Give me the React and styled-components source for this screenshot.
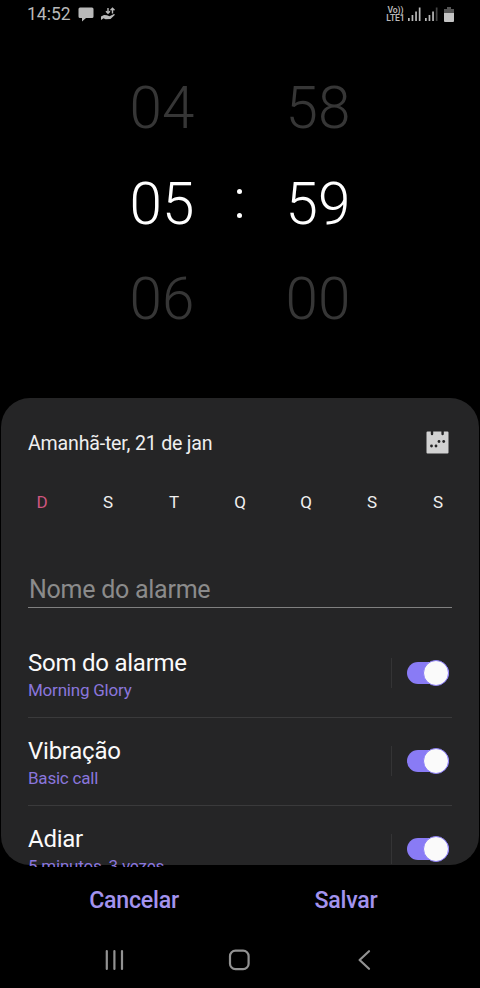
import styled, { createGlobalStyle } from 'styled-components';

const GlobalStyle = createGlobalStyle`
    * {
        box-sizing: border-box;
    }
    body {
        margin: 0;
        background: #000;
    }
`;

const Screen = styled.div`
    display: flex;
    flex-direction: column;
    width: 480px;
    height: 988px;
    overflow: hidden;
    background: #000;
    color: #fafafa;
    font-family: Roboto, sans-serif;
`;

const StatusBar = styled.div`
    display: flex;
    justify-content: space-between;
    align-items: center;
    height: 28px;
    padding: 0 26px 0 27px;
    color: #b9b9b9;
`;

const Clock = styled.span`
    width: 51px;
    font-size: 17.5px;
    line-height: 28px;
`;

const StatusGroup = styled.div`
    display: flex;
    align-items: center;
    height: 28px;
`;

const VolteBadge = styled.div`
    display: flex;
    flex-direction: column;
    align-items: center;
    width: 18px;
    margin-right: 3px;
    font-size: 8.6px;
    font-weight: 600;
    line-height: 8px;
    letter-spacing: -0.1px;
    white-space: nowrap;
`;

const TimePicker = styled.div`
    display: grid;
    grid-template-columns: 66px 90px 66px;
    grid-auto-rows: 95.7px;
    justify-content: center;
    align-items: center;
    height: 370px;
    padding-top: 32px;
    align-content: start;
`;

const Digits = styled.span`
    text-align: center;
    font-size: 58.4px;
    font-weight: 300;
    line-height: 70px;
    color: ${({ $active }) => ($active ? '#fff' : '#363636')};
`;

const Colon = styled.span`
    display: flex;
    flex-direction: column;
    align-items: center;
    gap: 19px;
    padding-right: 1px;
`;

const ColonDot = styled.i`
    width: 5px;
    height: 5px;
    border-radius: 50%;
    background: #fff;
`;

const Card = styled.div`
    display: flex;
    flex-direction: column;
    height: 467px;
    margin: 0 1px;
    padding: 0 27px;
    border-radius: 29px;
    background: #252526;
    overflow: clip;
    overflow-clip-margin: 2px;
`;

const DateRow = styled.div`
    display: flex;
    flex-shrink: 0;
    justify-content: space-between;
    align-items: center;
    height: 90px;
    padding-right: 3px;
`;

const DateText = styled.span`
    font-size: 19.6px;
    letter-spacing: -0.2px;
    color: #efefef;
`;

const WeekRow = styled.div`
    display: flex;
    flex-shrink: 0;
    justify-content: space-between;
    height: 75px;
    padding-top: 4px;
`;

const Day = styled.span`
    width: 28px;
    text-align: center;
    font-size: 17px;
    line-height: 21px;
    color: ${({ $sunday }) => ($sunday ? '#cf5680' : '#f0f0f0')};
`;

const NameField = styled.div`
    flex-shrink: 0;
    height: 45px;
    padding: 12px 0 0 1px;
    border-bottom: 1px solid #808080;
    font-size: 25px;
    line-height: 30px;
    letter-spacing: -0.26px;
    color: #8b8b8b;
`;

const Options = styled.div`
    padding-top: 22px;
`;

const Option = styled.div`
    display: flex;
    justify-content: space-between;
    height: 88px;
    border-bottom: 1px solid #3a3a3b;
`;

const OptionText = styled.div`
    display: flex;
    flex-direction: column;
    padding-top: 18px;
`;

const OptionTitle = styled.span`
    font-size: 24px;
    line-height: 30px;
    letter-spacing: -0.24px;
`;

const OptionValue = styled.span`
    font-size: 17px;
    line-height: 24px;
    letter-spacing: -0.22px;
    color: #8a76dc;
`;

const ToggleArea = styled.div`
    display: flex;
    align-items: center;
    height: 30px;
    margin-top: 28px;
    padding: 0 3px 0 15px;
    border-left: 1px solid #343435;
`;

const Track = styled.div`
    display: flex;
    align-items: center;
    justify-content: flex-end;
    width: 42px;
    height: 22px;
    border-radius: 11px;
    background: #897bf5;
`;

const Knob = styled.div`
    flex-shrink: 0;
    width: 26px;
    height: 26px;
    border: 1px solid #897bf5;
    border-radius: 50%;
    background: #fafafa;
`;

const Actions = styled.div`
    display: flex;
    justify-content: center;
    height: 67px;
    padding: 20px 28px 0;
`;

const ActionButton = styled.button`
    flex: 1;
    height: 30px;
    padding: 0;
    border: 0;
    background: none;
    color: #a393ee;
    font-family: inherit;
    font-size: 23.2px;
    font-weight: 500;
    line-height: 30px;
    letter-spacing: -0.25px;
`;

const NavBar = styled.div`
    display: flex;
    justify-content: space-between;
    align-items: center;
    height: 56px;
    padding: 0 103px 0 102px;
`;

const days = ['D', 'S', 'T', 'Q', 'Q', 'S', 'S'];

const options = [
    { title: 'Som do alarme', value: 'Morning Glory' },
    { title: 'Vibração', value: 'Basic call' },
    { title: 'Adiar', value: '5 minutos, 3 vezes' }
];

function ChatIcon() {
    return (
        <svg width="16" height="15" viewBox="0 0 16 15" fill="#b9b9b9">
            <path d="M2 0.5h12a1.5 1.5 0 0 1 1.5 1.5v7.5a1.5 1.5 0 0 1-1.5 1.5H8L4 14.5V11H2A1.5 1.5 0 0 1 .5 9.5V2A1.5 1.5 0 0 1 2 .5z" />
        </svg>
    );
}

function DataHandIcon() {
    return (
        <svg width="16" height="15" viewBox="0 0 16 15" style={{ marginLeft: 7 }}>
            <path d="M0 9.5l3-1.5 3 .3 2.5 1 4.5-2.3 1 .8-4.5 4.2-5 .3-2-1L0 13z" fill="#b9b9b9" />
            <path d="M7 1v5M5 4.3l2 2 2-2M11.5 6.5v-5M9.5 3.3l2-2 2 2" fill="none" stroke="#b9b9b9" strokeWidth="1.4" />
        </svg>
    );
}

function SignalIcon({ dim, width }) {
    return (
        <svg width={width} height="14" viewBox={`0 0 ${width} 14`} fill="#b9b9b9">
            <rect x="0" y="11" width="1.7" height="3" />
            <rect x="3.6" y="8" width="1.7" height="6" />
            <rect x="7.2" y="4.5" width="1.7" height="9.5" />
            <rect x="10.8" y="0.5" width="1.7" height="13.5" fill={dim ? '#444' : '#b9b9b9'} />
        </svg>
    );
}

function BatteryIcon() {
    return (
        <svg width="10" height="15" viewBox="0 0 10 15">
            <path d="M3 0h4v2h3v4H0V2h3z" fill="#555" />
            <path d="M0 6h10v8a1 1 0 0 1-1 1H1a1 1 0 0 1-1-1z" fill="#c4c4c4" />
        </svg>
    );
}

function CalendarIcon() {
    return (
        <svg width="23" height="25" viewBox="0 0 23 25">
            <path d="M1.5 0.5H4.8V3a1.2 1.2 0 0 0 2.4 0V.5h8.2V3a1.2 1.2 0 0 0 2.4 0V.5h3.7a1 1 0 0 1 1 1v20a1 1 0 0 1-1 1h-20a1 1 0 0 1-1-1v-20a1 1 0 0 1 1-1z" fill="#d2d2d2" />
            <g fill="#252526">
                <circle cx="5.5" cy="15" r="1.4" />
                <circle cx="10" cy="15" r="1.4" />
                <circle cx="13" cy="10.5" r="1.4" />
                <circle cx="17.7" cy="10.5" r="1.4" />
            </g>
        </svg>
    );
}

function App() {
    return <>
        <GlobalStyle />
        <Screen>
            <StatusBar>
                <StatusGroup>
                    <Clock>14:52</Clock>
                    <ChatIcon />
                    <DataHandIcon />
                </StatusGroup>
                <StatusGroup>
                    <VolteBadge>
                        <span>Vo))</span>
                        <span>LTE1</span>
                    </VolteBadge>
                    <SignalIcon width={17.5} />
                    <SignalIcon width={19} dim />
                    <BatteryIcon />
                </StatusGroup>
            </StatusBar>
            <TimePicker>
                <Digits>04</Digits>
                <span />
                <Digits>58</Digits>
                <Digits $active>05</Digits>
                <Colon>
                    <ColonDot />
                    <ColonDot />
                </Colon>
                <Digits $active>59</Digits>
                <Digits>06</Digits>
                <span />
                <Digits>00</Digits>
            </TimePicker>
            <Card>
                <DateRow>
                    <DateText>Amanhã-ter, 21 de jan</DateText>
                    <CalendarIcon />
                </DateRow>
                <WeekRow>
                    {days.map((day, i) => <Day key={i} $sunday={i === 0}>{day}</Day>)}
                </WeekRow>
                <NameField>Nome do alarme</NameField>
                <Options>
                    {options.map(option => (
                        <Option key={option.title}>
                            <OptionText>
                                <OptionTitle>{option.title}</OptionTitle>
                                <OptionValue>{option.value}</OptionValue>
                            </OptionText>
                            <ToggleArea>
                                <Track>
                                    <Knob />
                                </Track>
                            </ToggleArea>
                        </Option>
                    ))}
                </Options>
            </Card>
            <Actions>
                <ActionButton>Cancelar</ActionButton>
                <ActionButton>Salvar</ActionButton>
            </Actions>
            <NavBar>
                <svg width="24" height="24" viewBox="0 0 24 24" stroke="#929292" strokeWidth="2.2" strokeLinecap="round">
                    <path d="M4.8 3v18M12.4 3v18M20 3v18" />
                </svg>
                <svg width="24" height="24" viewBox="0 0 24 24" fill="none" stroke="#929292" strokeWidth="2.2">
                    <rect x="2" y="2.6" width="18.6" height="18.6" rx="5.5" />
                </svg>
                <svg width="24" height="24" viewBox="0 0 24 24" fill="none" stroke="#929292" strokeWidth="2.2" strokeLinecap="round" strokeLinejoin="round">
                    <path d="M16 3.2L6.6 12l9.4 8.8" />
                </svg>
            </NavBar>
        </Screen>
    </>
}

export default App;
